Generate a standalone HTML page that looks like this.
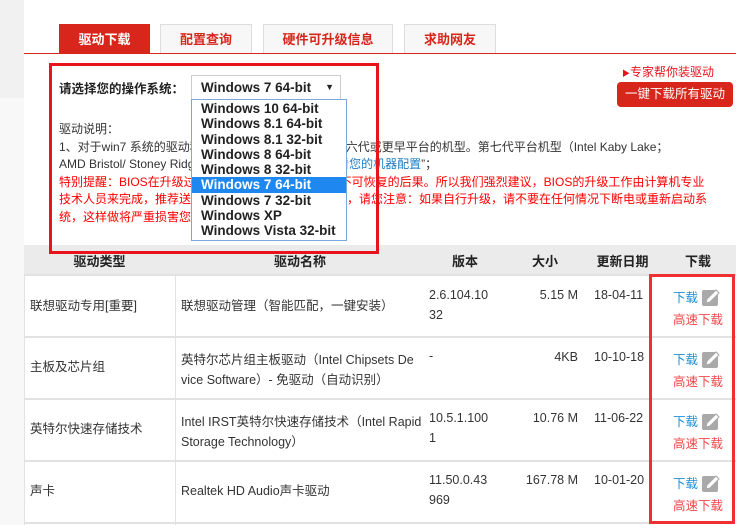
<!DOCTYPE html>
<html><head><meta charset="utf-8">
<style>
*{margin:0;padding:0;box-sizing:border-box}
body{width:746px;height:525px;overflow:hidden;background:#fff;font-family:"Liberation Sans","Noto Sans CJK SC",sans-serif;font-size:12px;color:#333;position:relative}
.a{position:absolute;white-space:nowrap}
.tab{position:absolute;top:24px;height:29px;border:1px solid #ddd;border-bottom:none;background:#f7f7f7;color:#d9261c;font-weight:bold;font-size:13px;text-align:center;line-height:29px}
.red{color:#f00}
.dd div{height:15.3px;line-height:15.3px;padding-left:9px;font-weight:bold;font-size:13.5px;color:#222}
.th{position:absolute;top:247px;height:30px;line-height:30px;font-weight:bold;font-size:13px;color:#222;text-align:center}
.hl{position:absolute;left:24px;width:712px;height:2px;background:#e2e2e2}
.cell{position:absolute;font-size:12.5px;line-height:20px;color:#333}
</style></head><body>
<div class="a" style="left:0;top:0;width:24px;height:98px;background:#f1f1f1"></div>
<div class="a" style="left:0;top:98px;width:24px;height:427px;background:#f8f8f8"></div>

<div class="tab" style="left:59px;width:91px;background:#d9261c;color:#fff;border-color:#d9261c">驱动下载</div>
<div class="tab" style="left:160px;width:92px">配置查询</div>
<div class="tab" style="left:263px;width:130px">硬件可升级信息</div>
<div class="tab" style="left:404px;width:92px">求助网友</div>
<div class="a" style="left:24px;top:53px;width:712px;height:1px;background:#d9261c"></div>

<div class="a" style="left:59px;top:78px;font-weight:bold;font-size:12.5px;color:#222">请选择您的操作系统：</div>
<div class="a" style="left:191px;top:75px;width:150px;height:25px;border:1px solid #ccc;background:#fff;font-weight:bold;font-size:13.5px;line-height:23px;padding-left:9px;color:#222">Windows 7 64-bit <span style="position:absolute;right:6px;font-size:9px">▼</span></div>

<div class="a" style="left:59px;top:121px;line-height:17.5px;font-size:12px">驱动说明：<br>1、对于win7 系统的驱动程序目前仅适用于第五代、第六代或更早平台的机型。第七代平台机型（Intel Kaby Lake；<br>AMD Bristol/ Stoney Ridge）及以上的机型请点击“<span style="color:#1a7bc4">查看您的机器配置</span>”；<br><span class="red">特别提醒：BIOS在升级过程中断电将会造成无法开机不可恢复的后果。所以我们强烈建议，BIOS的升级工作由计算机专业</span><br><span class="red">技术人员来完成，推荐送到服务站升级。若需自行升级，请您注意：如果自行升级，请不要在任何情况下断电或重新启动系</span><br><span class="red">统，这样做将严重损害您的计算机。</span></div>

<div class="a dd" style="left:191px;top:99px;width:156px;height:142px;border:1px solid #7aa7e0;background:#fff;padding-top:1px">
<div>Windows 10 64-bit</div><div>Windows 8.1 64-bit</div><div>Windows 8.1 32-bit</div><div>Windows 8 64-bit</div><div>Windows 8 32-bit</div><div style="background:#1e88f0;color:#fff">Windows 7 64-bit</div><div>Windows 7 32-bit</div><div>Windows XP</div><div>Windows Vista 32-bit</div>
</div>

<div class="a" style="left:622px;top:63px;color:#e8141c;font-size:12px"><span style="font-size:8px">▶</span>专家帮你装驱动</div>
<div class="a" style="left:617px;top:82px;width:116px;height:25px;background:#d9261c;border-radius:4px;color:#fff;text-align:center;line-height:25px;font-size:12.5px">一键下载所有驱动</div>

<div class="a" style="left:24px;top:245px;width:712px;height:30px;background:#ebebeb"></div>
<div class="a" style="left:49px;top:63px;width:330px;height:191px;border:3px solid #e8141c"></div>
<div class="th" style="left:24px;width:151px">驱动类型</div>
<div class="th" style="left:175px;width:250px">驱动名称</div>
<div class="th" style="left:425px;width:80px">版本</div>
<div class="th" style="left:505px;width:80px">大小</div>
<div class="th" style="left:585px;width:75px">更新日期</div>
<div class="th" style="left:660px;width:76px">下载</div>

<div class="hl" style="top:274px"></div>
<div class="hl" style="top:336px"></div>
<div class="hl" style="top:398px"></div>
<div class="hl" style="top:460px"></div>
<div class="hl" style="top:522px"></div>
<div class="a" style="left:24px;top:275px;width:1px;height:250px;background:#e2e2e2"></div>
<div class="a" style="left:175px;top:275px;width:1px;height:250px;background:#e2e2e2"></div>

<div class="cell a" style="left:30px;top:296px">联想驱动专用[重要]</div>
<div class="cell a" style="left:181px;top:296px">联想驱动管理（智能匹配，一键安装）</div>
<div class="cell a" style="left:429px;top:285px">2.6.104.10<br>32</div>
<div class="cell a" style="left:505px;top:285px;width:73px;text-align:right">5.15 M</div>
<div class="cell a" style="left:594px;top:285px;width:54px;overflow:hidden">18-04-11</div>

<div class="cell a" style="left:30px;top:357px">主板及芯片组</div>
<div class="cell a" style="left:181px;top:350px">英特尔芯片组主板驱动（Intel Chipsets De<br>vice Software）- 免驱动（自动识别）</div>
<div class="cell a" style="left:429px;top:346px">-</div>
<div class="cell a" style="left:505px;top:347px;width:73px;text-align:right">4KB</div>
<div class="cell a" style="left:594px;top:347px;width:54px;overflow:hidden">10-10-18</div>

<div class="cell a" style="left:30px;top:419px">英特尔快速存储技术</div>
<div class="cell a" style="left:181px;top:412px;width:240px;overflow:hidden">Intel IRST英特尔快速存储技术（Intel Rapid<br>Storage Technology）</div>
<div class="cell a" style="left:429px;top:408px">10.5.1.100<br>1</div>
<div class="cell a" style="left:505px;top:408px;width:73px;text-align:right">10.76 M</div>
<div class="cell a" style="left:594px;top:408px;width:54px;overflow:hidden">11-06-22</div>

<div class="cell a" style="left:30px;top:481px">声卡</div>
<div class="cell a" style="left:181px;top:481px">Realtek HD Audio声卡驱动</div>
<div class="cell a" style="left:429px;top:470px">11.50.0.43<br>969</div>
<div class="cell a" style="left:505px;top:470px;width:73px;text-align:right">167.78 M</div>
<div class="cell a" style="left:594px;top:470px;width:54px;overflow:hidden">10-01-20</div>

<div class="a" style="left:650px;top:276px;width:86px;height:249px;background:#fff"></div>
<div class="hl" style="top:336px;left:650px;width:86px"></div>
<div class="hl" style="top:398px;left:650px;width:86px"></div>
<div class="hl" style="top:460px;left:650px;width:86px"></div>

<div class="a" style="left:673px;top:287px;color:#1a8fd8;font-size:12.5px">下载</div>
<div class="a" style="left:673px;top:309px;color:#f04848;font-size:12.5px">高速下载</div>
<div class="a" style="left:673px;top:349px;color:#1a8fd8;font-size:12.5px">下载</div>
<div class="a" style="left:673px;top:371px;color:#f04848;font-size:12.5px">高速下载</div>
<div class="a" style="left:673px;top:411px;color:#1a8fd8;font-size:12.5px">下载</div>
<div class="a" style="left:673px;top:433px;color:#f04848;font-size:12.5px">高速下载</div>
<div class="a" style="left:673px;top:473px;color:#1a8fd8;font-size:12.5px">下载</div>
<div class="a" style="left:673px;top:495px;color:#f04848;font-size:12.5px">高速下载</div>

<svg class="a" style="left:702px;top:288px" width="19" height="18" viewBox="0 0 19 18"><rect x="0" y="2" width="16" height="16" rx="2" fill="#a9a9a9"/><path d="M4 15 L5 11 L14 2 L17 5 L8 14 Z" fill="#fff" stroke="#a9a9a9" stroke-width="1"/></svg>
<svg class="a" style="left:702px;top:350px" width="19" height="18" viewBox="0 0 19 18"><rect x="0" y="2" width="16" height="16" rx="2" fill="#a9a9a9"/><path d="M4 15 L5 11 L14 2 L17 5 L8 14 Z" fill="#fff" stroke="#a9a9a9" stroke-width="1"/></svg>
<svg class="a" style="left:702px;top:412px" width="19" height="18" viewBox="0 0 19 18"><rect x="0" y="2" width="16" height="16" rx="2" fill="#a9a9a9"/><path d="M4 15 L5 11 L14 2 L17 5 L8 14 Z" fill="#fff" stroke="#a9a9a9" stroke-width="1"/></svg>
<svg class="a" style="left:702px;top:474px" width="19" height="18" viewBox="0 0 19 18"><rect x="0" y="2" width="16" height="16" rx="2" fill="#a9a9a9"/><path d="M4 15 L5 11 L14 2 L17 5 L8 14 Z" fill="#fff" stroke="#a9a9a9" stroke-width="1"/></svg>

<div class="a" style="left:649px;top:274px;width:86px;height:250px;border:3px solid #f03030"></div>
</body></html>
